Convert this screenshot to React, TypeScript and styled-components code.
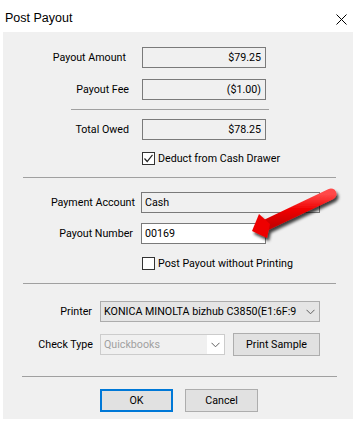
import React from 'react';
import styled, { createGlobalStyle } from 'styled-components';

const GlobalStyle = createGlobalStyle`
  html, body {
    margin: 0;
    padding: 0;
    background: #ffffff;
  }
  body {
    font-family: Roboto, "Liberation Sans", Arial, sans-serif;
  }
`;

const Window = styled.div`
  position: relative;
  width: 356px;
  height: 423px;
  background: #ffffff;
  overflow: hidden;
`;

const TitleBar = styled.div`
  height: 32px;
  display: flex;
  align-items: center;
  justify-content: space-between;
  padding: 0 9px 0 5px;
  box-sizing: border-box;
`;

const Title = styled.span`
  font-family: "Liberation Sans", Arial, sans-serif;
  font-size: 12.5px;
  color: #000;
  margin-top: 4px;
`;

const CloseIcon = styled.svg`
  width: 11px;
  height: 11px;
  margin-top: 7px;
`;

const Client = styled.div`
  margin: 0 3px;
  height: 387px;
  background: #f0f0f0;
  display: flex;
  flex-direction: column;
  overflow: hidden;
`;

const Row = styled.div<{ $mt: number; $h?: number }>`
  display: flex;
  align-items: center;
  margin-top: ${(p) => p.$mt}px;
  height: ${(p) => p.$h ?? 21}px;
  flex-shrink: 0;
`;

const Label = styled.span<{ $end: number; $gap: number }>`
  width: ${(p) => p.$end}px;
  margin-right: ${(p) => p.$gap}px;
  text-align: right;
  font-size: 10.7px;
  color: #000;
  white-space: nowrap;
  flex-shrink: 0;
`;

const Field = styled.div<{ $w: number; $white?: boolean; $right?: boolean }>`
  width: ${(p) => p.$w}px;
  height: 21px;
  box-sizing: border-box;
  border: 1px solid #7a7a7a;
  background: ${(p) => (p.$white ? '#ffffff' : '#f0f0f0')};
  display: flex;
  align-items: center;
  justify-content: ${(p) => (p.$right ? 'flex-end' : 'flex-start')};
  padding: 0 ${(p) => (p.$right ? 4 : 2)}px 0 ${(p) => (p.$right ? 0 : 3)}px;
  font-size: 10.7px;
  color: #000;
  white-space: nowrap;
  overflow: hidden;
`;

const Combo = styled.div<{ $w: number; $disabled?: boolean }>`
  width: ${(p) => p.$w}px;
  height: 21px;
  box-sizing: border-box;
  border: 1px solid ${(p) => (p.$disabled ? '#cccccc' : '#acacac')};
  background: ${(p) => (p.$disabled ? '#f0f0f0' : '#e5e5e5')};
  display: flex;
  align-items: center;
  font-size: 10.7px;
  color: ${(p) => (p.$disabled ? '#a0a0a0' : '#000')};
  white-space: nowrap;
  overflow: hidden;
`;

const ComboText = styled.span`
  flex: 1;
  padding-left: 3px;
  overflow: hidden;
`;

const ComboArrow = styled.span<{ $disabled?: boolean }>`
  width: 17px;
  height: 100%;
  display: flex;
  align-items: center;
  justify-content: center;
  background: ${(p) => (p.$disabled ? '#ffffff' : 'transparent')};
  flex-shrink: 0;
`;

const Separator = styled.div<{ $mt: number; $left: number; $width: number }>`
  margin-top: ${(p) => p.$mt}px;
  margin-left: ${(p) => p.$left}px;
  width: ${(p) => p.$width}px;
  height: 1px;
  background: #a0a0a0;
  flex-shrink: 0;
`;

const CheckRow = styled.label<{ $mt: number }>`
  display: flex;
  align-items: center;
  margin-top: ${(p) => p.$mt}px;
  margin-left: 139px;
  height: 13px;
  font-size: 10.7px;
  color: #000;
  flex-shrink: 0;
`;

const Box = styled.span`
  width: 13px;
  height: 13px;
  box-sizing: border-box;
  border: 1px solid #333333;
  background: #ffffff;
  margin-right: 3px;
  display: flex;
  align-items: center;
  justify-content: center;
`;

const Button = styled.div<{ $w: number; $default?: boolean; $gap?: number }>`
  width: ${(p) => p.$w}px;
  height: 23px;
  box-sizing: border-box;
  border: ${(p) => (p.$default ? '2px solid #0078d7' : '1px solid #adadad')};
  background: #e1e1e1;
  display: flex;
  align-items: center;
  justify-content: center;
  font-size: 10.7px;
  color: #000;
  margin-left: ${(p) => p.$gap ?? 0}px;
  flex-shrink: 0;
`;

const Arrow = styled.svg`
  position: absolute;
  left: 244px;
  top: 180px;
  width: 104px;
  height: 68px;
  pointer-events: none;
`;

const Chevron = () => (
  <svg width="9" height="6" viewBox="0 0 9 6">
    <path d="M0.5 0.8 L4.5 4.8 L8.5 0.8" fill="none" stroke="#606060" strokeWidth="1" />
  </svg>
);

const Check = () => (
  <svg width="11" height="11" viewBox="0 0 11 11">
    <path d="M1.5 5.5 L4.2 8.5 L9.5 1.8" fill="none" stroke="#222" strokeWidth="1.2" />
  </svg>
);

export default function App() {
  return (
    <>
      <GlobalStyle />
      <Window>
        <TitleBar>
          <Title>Post Payout</Title>
          <CloseIcon viewBox="0 0 11 11">
            <path d="M0.5 0.5 L10.5 10.5 M10.5 0.5 L0.5 10.5" stroke="#000" strokeWidth="1" />
          </CloseIcon>
        </TitleBar>
        <Client>
          <Row $mt={15}>
            <Label $end={123} $gap={16}>Payout Amount</Label>
            <Field $w={124} $right>$79.25</Field>
          </Row>
          <Row $mt={11}>
            <Label $end={126} $gap={13}>Payout Fee</Label>
            <Field $w={124} $right>($1.00)</Field>
          </Row>
          <Separator $mt={9} $left={68} $width={198} />
          <Row $mt={9}>
            <Label $end={126} $gap={13}>Total Owed</Label>
            <Field $w={124} $right>$78.25</Field>
          </Row>
          <CheckRow $mt={12}>
            <Box>
              <Check />
            </Box>
            Deduct from Cash Drawer
          </CheckRow>
          <Separator $mt={12} $left={20} $width={313} />
          <Row $mt={14}>
            <Label $end={132} $gap={6}>Payment Account</Label>
            <Field $w={179}>Cash</Field>
          </Row>
          <Row $mt={10}>
            <Label $end={130} $gap={8}>Payout Number</Label>
            <Field $w={125} $white>00169</Field>
          </Row>
          <CheckRow $mt={13}>
            <Box />
            Post Payout without Printing
          </CheckRow>
          <Separator $mt={13} $left={20} $width={313} />
          <Row $mt={17}>
            <Label $end={89} $gap={8}>Printer</Label>
            <Combo $w={220}>
              <ComboText>KONICA MINOLTA bizhub C3850(E1:6F:9</ComboText>
              <ComboArrow>
                <Chevron />
              </ComboArrow>
            </Combo>
          </Row>
          <Row $mt={12}>
            <Label $end={90} $gap={7}>Check Type</Label>
            <Combo $w={125} $disabled>
              <ComboText>Quickbooks</ComboText>
              <ComboArrow $disabled>
                <Chevron />
              </ComboArrow>
            </Combo>
            <Button $w={87} $gap={8}>Print Sample</Button>
          </Row>
          <Separator $mt={21} $left={19} $width={315} />
          <Row $mt={12} $h={23}>
            <Button $w={73} $default $gap={97}>OK</Button>
            <Button $w={73} $gap={12}>Cancel</Button>
          </Row>
        </Client>
        <Arrow viewBox="0 0 104 68">
          <defs>
            <linearGradient id="redGrad" x1="0" y1="0" x2="0" y2="1">
              <stop offset="0" stopColor="#ff4a4a" />
              <stop offset="0.5" stopColor="#f00000" />
              <stop offset="1" stopColor="#c80000" />
            </linearGradient>
            <filter id="shadow" x="-20%" y="-20%" width="150%" height="160%">
              <feDropShadow dx="2" dy="3" stdDeviation="1.8" floodColor="#000" floodOpacity="0.75" />
            </filter>
          </defs>
          <g filter="url(#shadow)">
            <path d="M87 14 L22 45" stroke="url(#redGrad)" strokeWidth="11" strokeLinecap="round" fill="none" />
            <path d="M8 51 L15 34 L26 44 L23 58 Z" fill="#ee0000" />
          </g>
        </Arrow>
      </Window>
    </>
  );
}
